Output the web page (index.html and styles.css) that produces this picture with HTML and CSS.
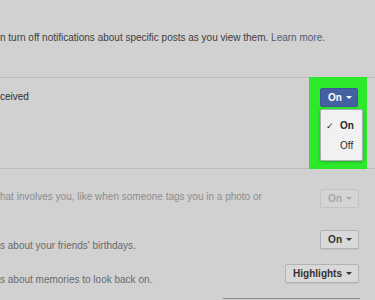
FILE: index.html
```html
<!DOCTYPE html>
<html lang="en">
<head>
  <meta charset="UTF-8">
  <meta name="viewport" content="width=device-width, initial-scale=1.0">
  <title>Notification settings</title>
  <link rel="stylesheet" href="styles.css">
</head>
<body>
  <div class="page">
    <p class="intro">n turn off notifications about specific posts as you view them. <a href="#" class="learn">Learn more.</a></p>

    <div class="setting first">
      <div class="label dark">ceived</div>
      <div class="highlight">
        <button class="btn primary">On <span class="caret"></span></button>
        <ul class="menu">
          <li class="item checked"><span class="check">&#10003;</span>On</li>
          <li class="item">Off</li>
        </ul>
      </div>
    </div>

    <div class="setting second">
      <div class="label muted">hat involves you, like when someone tags you in a photo or</div>
      <button class="btn disabled">On <span class="caret"></span></button>
    </div>

    <div class="setting third">
      <div class="label">s about your friends' birthdays.</div>
      <button class="btn">On <span class="caret"></span></button>
    </div>

    <div class="setting fourth">
      <div class="label">s about memories to look back on.</div>
      <button class="btn">Highlights <span class="caret"></span></button>
    </div>

    <div class="next-edge"></div>
  </div>
</body>
</html>
```

FILE: styles.css
```css
body {
  margin: 0;
  background-color: #d1d1d1;
  font-family: "Liberation Sans", Arial, sans-serif;
  font-size: 10px;
  color: #3d3d3d;
  overflow: hidden;
}

.page {
  width: 375px;
  height: 300px;
  overflow: hidden;
}

.intro {
  margin: 0;
  padding-top: 31px;
  height: 46px;
  line-height: 14px;
  color: #3e3e3e;
}

.learn {
  color: #4f5b74;
  text-decoration: none;
}

.setting {
  display: flex;
  justify-content: space-between;
  align-items: flex-start;
}

.label {
  line-height: 14px;
  color: #6a6a6a;
  white-space: nowrap;
}

.label.dark {
  color: #2e2e2e;
}

.label.muted {
  color: #8d8d8d;
}

/* row with the open dropdown */
.setting.first {
  height: 90px;
  border-top: 1px solid #bdbdbd;
  border-bottom: 1px solid #bdbdbd;
}

.setting.first .label {
  padding-top: 12px;
}

.highlight {
  box-sizing: border-box;
  width: 58px;
  height: 92px;
  margin: -1px 8px 0 0;
  padding: 11px 0 0 11px;
  background-color: #2ce92c;
}

.btn {
  display: inline-flex;
  align-items: center;
  gap: 4px;
  height: 19px;
  padding: 0 6px 0 7px;
  margin-right: 16px;
  border: 1px solid #b3b3b3;
  border-radius: 2px;
  background-color: #d9d9d9;
  color: #333;
  font-family: "Liberation Sans", Arial, sans-serif;
  font-size: 10px;
  font-weight: bold;
  box-shadow: 0 1px 0 #c2c2c2;
}

.caret {
  width: 0;
  height: 0;
  border-left: 3px solid transparent;
  border-right: 3px solid transparent;
  border-top: 3px solid currentColor;
}

.btn.primary {
  width: 38px;
  margin: 0;
  background-color: #4560a0;
  border-color: #3c5594;
  color: #fff;
  box-shadow: none;
}

.btn.disabled {
  background-color: #d4d4d4;
  border-color: #c3c3c3;
  color: #a8a8a8;
  box-shadow: none;
}

.menu {
  list-style: none;
  width: 43px;
  margin: 2px 0 0;
  padding: 6px 0 4px;
  box-sizing: border-box;
  background-color: #f1f1f1;
  border: 1px solid #a9b0b5;
  border-radius: 2px;
  box-shadow: 0 1px 3px rgba(0, 0, 0, 0.25);
  font-size: 10px;
  color: #2b2b2b;
}

.item {
  position: relative;
  padding-left: 19px;
  height: 20px;
  line-height: 20px;
}

.item.checked {
  font-weight: bold;
}

.check {
  position: absolute;
  left: 5px;
  top: 0;
  font-size: 9px;
  font-weight: normal;
}

.setting.second {
  height: 52px;
}

.setting.second .label {
  padding-top: 21px;
}

.setting.second .btn {
  margin-top: 20px;
}

.setting.third {
  height: 36px;
}

.setting.third .label {
  padding-top: 18px;
}

.setting.third .btn {
  margin-top: 9px;
}

.setting.fourth {
  height: 41px;
}

.setting.fourth .label {
  padding-top: 16px;
}

.setting.fourth .btn {
  margin-top: 7px;
}

.next-edge {
  width: 137px;
  margin-left: 223px;
  border-top: 1px solid #8f8f8f;
}
```
